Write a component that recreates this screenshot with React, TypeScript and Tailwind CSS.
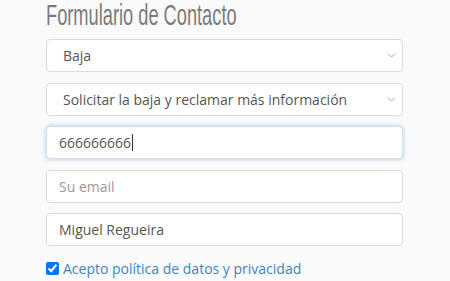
import { ChevronDown } from "lucide-react";

const field =
  "h-[33px] w-full rounded-[4px] border border-[#dcdcdc] bg-white px-3 text-[14px] text-[#555] outline-none";

function Select({ label }: { label: string }) {
  return (
    <div className={`${field} flex items-center justify-between pl-4 pr-[4px]`}>
      <span>{label}</span>
      <ChevronDown size={13} strokeWidth={1.4} className="text-[#888]" />
    </div>
  );
}

export default function App() {
  return (
    <div className="min-h-[281px] w-[450px] bg-[#fafafa] font-['Open_Sans',sans-serif]">
      <div className="mx-[46px] flex w-[357px] flex-col">
        <h1 className="origin-left [transform:scaleX(0.608)] whitespace-nowrap font-['Liberation_Sans_Narrow','Liberation_Sans',sans-serif] text-[30px] leading-[30px] text-[#7a7a7a]">
          Formulario de Contacto
        </h1>

        <div className="mt-[9px] flex flex-col gap-[10.5px]">
          <Select label="Baja" />
          <Select label="Solicitar la baja y reclamar más información" />

          <div
            className={`${field} flex items-center border-[#8fc3ee] shadow-[0_0_4px_rgba(102,175,233,0.6)]`}
          >
            <span>666666666</span>
            <span className="ml-[1px] h-[17px] w-[1px] bg-[#333]" />
          </div>

          <input className={`${field} placeholder:text-[#999]`} placeholder="Su email" />

          <input className={field} defaultValue="Miguel Regueira" />
        </div>

        <label className="mt-[12px] flex items-center gap-[4px] text-[14px] text-[#3a85c6]">
          <input type="checkbox" defaultChecked className="m-0 h-[13px] w-[13px] accent-[#0075ff]" />
          Acepto política de datos y privacidad
        </label>
      </div>
    </div>
  );
}
